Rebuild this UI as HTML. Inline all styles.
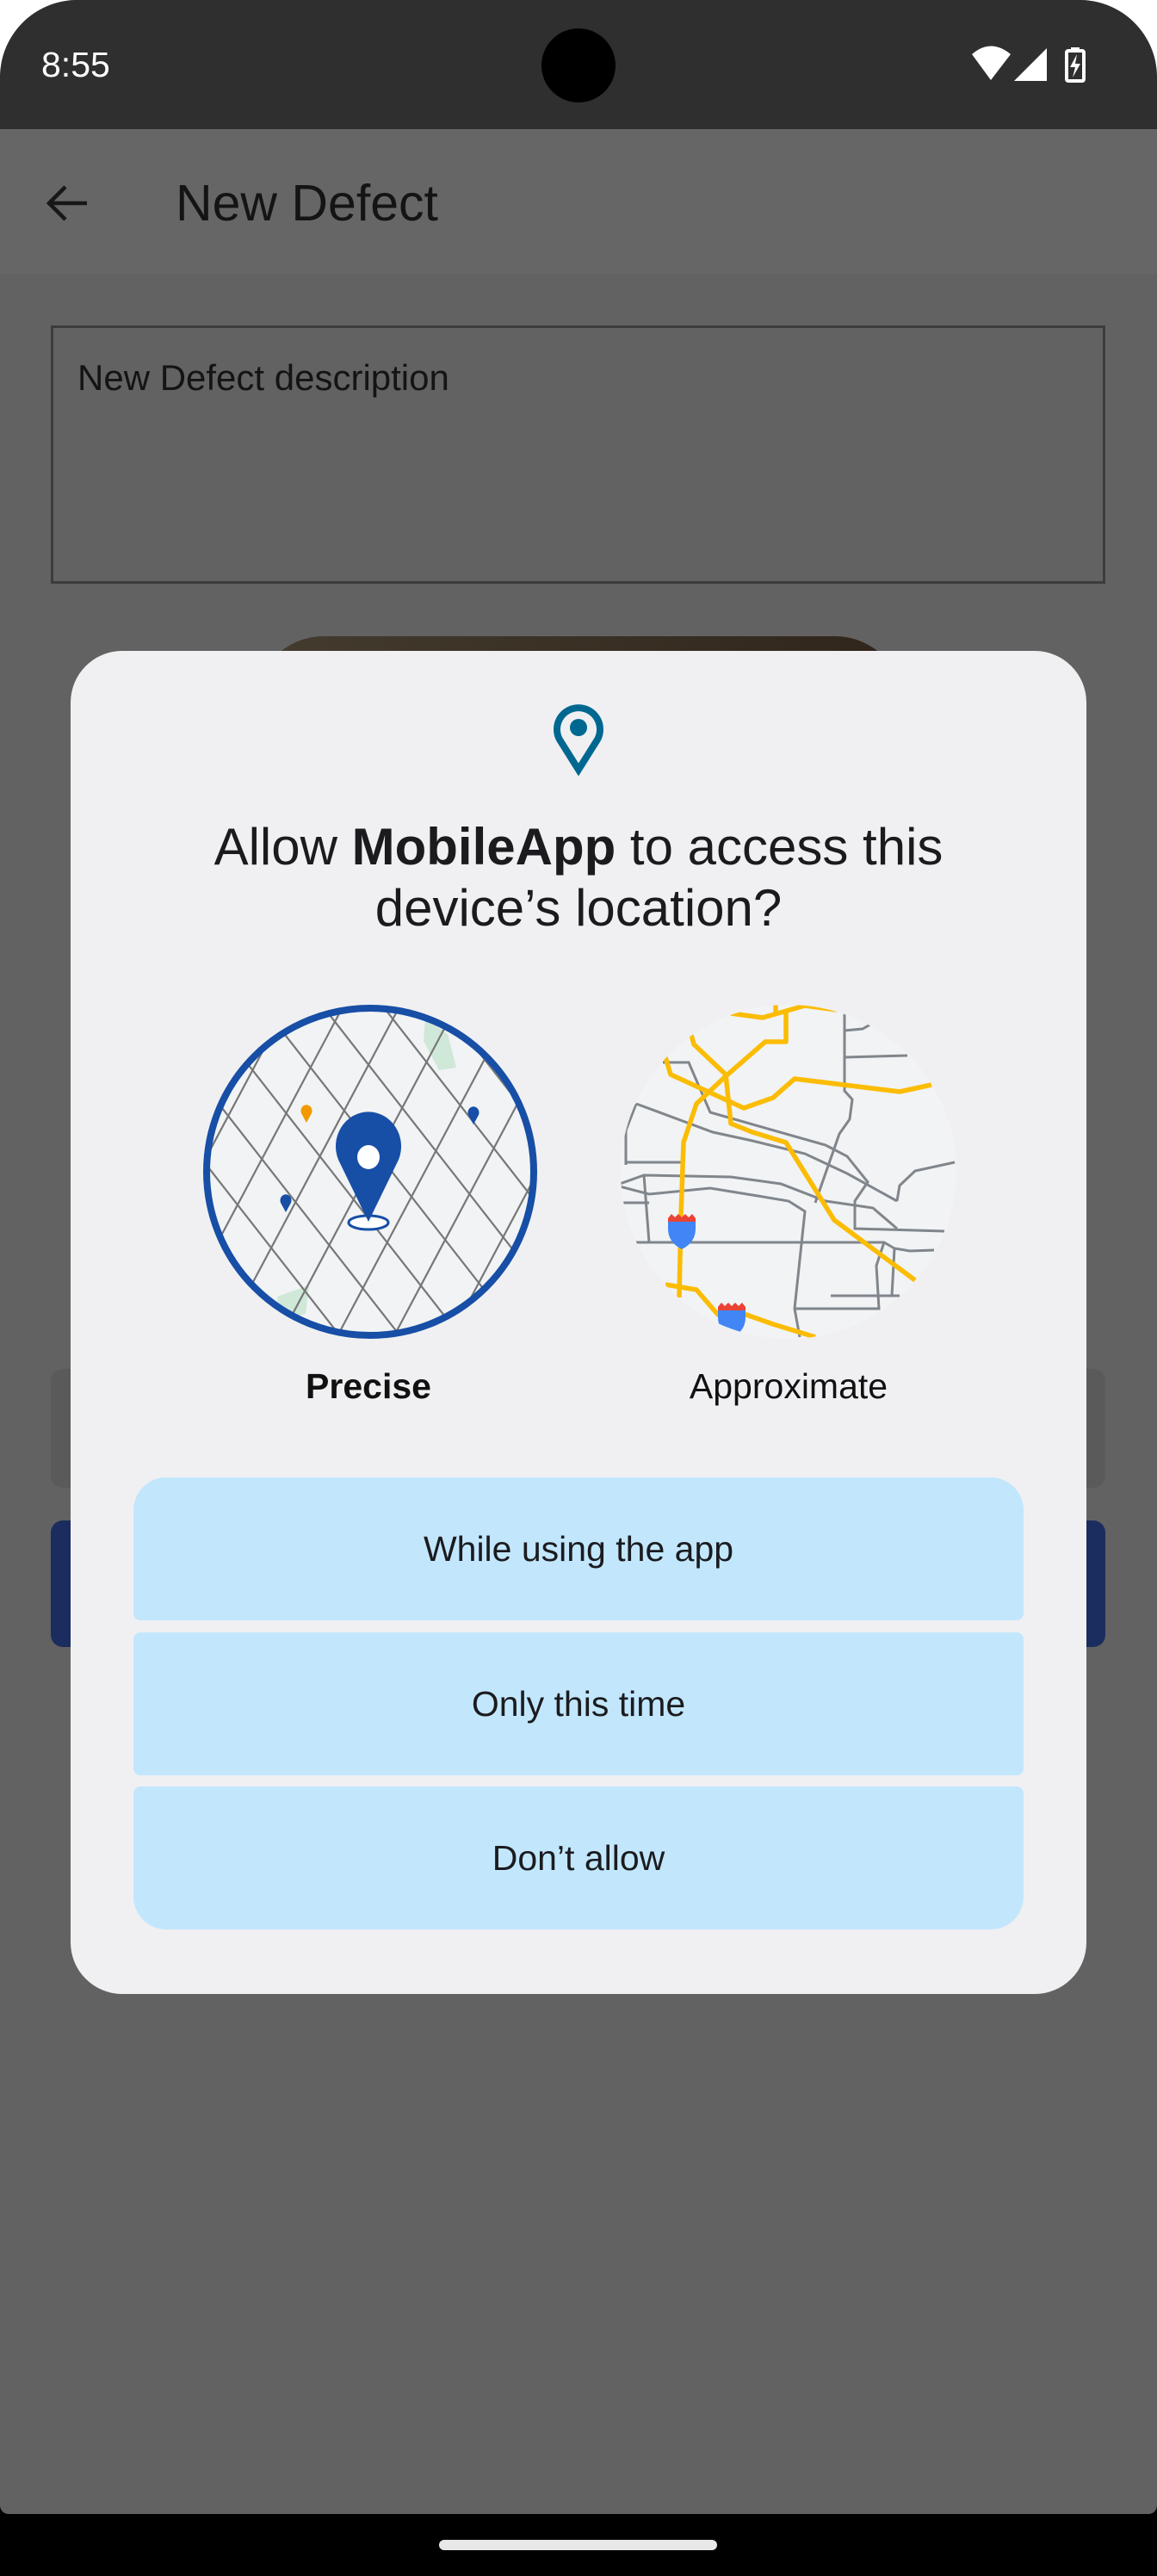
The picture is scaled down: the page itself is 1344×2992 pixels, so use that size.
<!DOCTYPE html>
<html><head><meta charset="utf-8"><style>
*{margin:0;padding:0;box-sizing:border-box}
body{width:1344px;height:2992px;background:#fff;position:relative;overflow:hidden;font-family:"Liberation Sans",Roboto,sans-serif}
.abs{position:absolute}
#screen{left:0;top:0;width:1344px;height:2992px;background:#000;border-radius:90px 90px 0 0;overflow:hidden}
.btn{position:absolute;left:155px;width:1034px;height:166px;background:#c2e7fd;display:flex;align-items:center;justify-content:center;font-size:41px;color:#1b1b1f}
</style></head><body>
<div id="screen" class="abs">
  <div class="abs" style="left:0;top:0;width:1344px;height:150px;background:#2f2f2f"></div>
  <div class="abs" style="left:48px;top:52px;font-size:41px;color:#fff">8:55</div>
  <div class="abs" style="left:629px;top:33px;width:86px;height:86px;border-radius:50%;background:#000"></div>
  <svg class="abs" style="left:1120px;top:50px" width="150" height="50" viewBox="1120 50 150 50">
    <path d="M1129 63 Q1151 44 1174 63 L1151 93 Z" fill="#fff"/>
    <path d="M1178 94 L1216 56 L1216 94 Z" fill="#fff"/>
    <rect x="1239" y="59" width="20" height="35" rx="2" fill="none" stroke="#fff" stroke-width="4"/>
    <rect x="1244" y="55" width="10" height="5" fill="#fff"/>
    <path d="M1251 63 L1243 78 L1249 78 L1246 90 L1255 74 L1249 74 Z" fill="#fff"/>
  </svg>
  <div class="abs" style="left:0;top:150px;width:1344px;height:2770px;background:#626262;border-radius:0 0 10px 10px"></div>
  <div class="abs" style="left:0;top:150px;width:1344px;height:168px;background:#666"></div>
  <svg class="abs" style="left:50px;top:210px" width="56" height="56" viewBox="0 0 56 56"><path d="M51 26 H8 M26 7 L7 26 L26 45" fill="none" stroke="#171717" stroke-width="4.5"/></svg>
  <div class="abs" style="left:204px;top:202px;font-size:59px;color:#141414">New Defect</div>
  <div class="abs" style="left:59px;top:378px;width:1225px;height:300px;border:3px solid #3c3c3c"></div>
  <div class="abs" style="left:90px;top:415px;font-size:42px;color:#141414">New Defect description</div>
  <div class="abs" style="left:296px;top:739px;width:754px;height:200px;border-radius:80px 80px 0 0;background:linear-gradient(90deg,#443c2f,#30251b)"></div>
  <div class="abs" style="left:59px;top:1590px;width:1225px;height:138px;background:#5a5a5a;border-radius:14px"></div>
  <div class="abs" style="left:59px;top:1766px;width:1225px;height:147px;background:#1b2d5e;border-radius:14px"></div>

  <div class="abs" style="left:82px;top:756px;width:1180px;height:1560px;background:#f0f0f2;border-radius:60px"></div>
  <svg class="abs" style="left:640px;top:815px" width="64" height="86" viewBox="0 0 64 86"><path d="M32 79 L10 44 A25 25 0 1 1 54 44 Z" fill="none" stroke="#006890" stroke-width="8" stroke-linejoin="miter"/><circle cx="32" cy="30" r="10" fill="#006890"/></svg>
  <div class="abs" style="left:82px;top:948px;width:1180px;text-align:center;font-size:60px;line-height:71px;color:#1b1b1f">Allow <b>MobileApp</b> to access this<br>device’s location?</div>

  <svg class="abs" style="left:230px;top:1161px" width="400" height="400" viewBox="0 0 400 400">
    <defs><clipPath id="c1"><circle cx="200" cy="200" r="190"/></clipPath></defs>
    <circle cx="200" cy="200" r="190" fill="#f1f3f4"/>
    <g clip-path="url(#c1)">
      <path d="M264 22 L290 40 L300 79 L280 82 L262 48 Z" fill="#cfe8d8"/>
      <path d="M92 345 L129 332 L125 365 L95 372 Z" fill="#cfe8d8"/>
      <g transform="rotate(52 200 200)" stroke="#777" stroke-width="2.2">
        <line x1="-100" y1="-40" x2="500" y2="-40"/><line x1="-100" y1="15" x2="500" y2="15"/><line x1="-100" y1="70" x2="500" y2="70"/><line x1="-100" y1="125" x2="500" y2="125"/><line x1="-100" y1="180" x2="500" y2="180"/><line x1="-100" y1="235" x2="500" y2="235"/><line x1="-100" y1="290" x2="500" y2="290"/><line x1="-100" y1="345" x2="500" y2="345"/><line x1="-100" y1="400" x2="500" y2="400"/>
      </g>
      <g transform="rotate(118 200 200)" stroke="#777" stroke-width="2.2">
        <line x1="-100" y1="-30" x2="500" y2="-30"/><line x1="-100" y1="28" x2="500" y2="28"/><line x1="-100" y1="86" x2="500" y2="86"/><line x1="-100" y1="144" x2="500" y2="144"/><line x1="-100" y1="202" x2="500" y2="202"/><line x1="-100" y1="260" x2="500" y2="260"/><line x1="-100" y1="318" x2="500" y2="318"/><line x1="-100" y1="376" x2="500" y2="376"/>
      </g>
      <path d="M126 143 L120 132 A6.5 7 0 1 1 132 132 Z" fill="#f29900"/>
      <path d="M320 145 L314 134 A6.5 7 0 1 1 326 134 Z" fill="#174ea6"/>
      <path d="M102 247 L96 236 A6.5 7 0 1 1 108 236 Z" fill="#174ea6"/>
    </g>
    <circle cx="200" cy="200" r="190" fill="none" stroke="#174ea6" stroke-width="8"/>
    <ellipse cx="198" cy="259" rx="23" ry="8" fill="#fff" stroke="#174ea6" stroke-width="3"/>
    <path d="M198 258 L163 186 A38 40 0 1 1 233 186 Z" fill="#174ea6"/>
    <ellipse cx="198" cy="183" rx="13" ry="14" fill="#fff"/>
  </svg>

  <svg class="abs" style="left:716px;top:1161px" width="400" height="400" viewBox="0 0 400 400">
    <defs><clipPath id="c2"><ellipse cx="200" cy="200" rx="195" ry="194"/></clipPath></defs>
    <g clip-path="url(#c2)">
      <rect width="400" height="400" fill="#f1f3f4"/>
      <g fill="none" stroke="#80868b" stroke-width="3">
        <polyline points="265,16 265,106 274,116 271,139 259,156 231,236"/>
        <polyline points="265,36 286,34 295,29"/>
        <polyline points="265,67 338,65"/>
        <polyline points="23,121 112,154 158,164 219,179 268,202 326,234"/>
        <polyline points="54,73 84,73 109,131 243,169 268,182 292,212 277,234 277,266 381,269"/>
        <polyline points="23,121 11,152 11,192"/>
        <polyline points="11,189 75,189"/>
        <polyline points="4,214 32,204 133,206 191,214 243,234 298,242 326,266"/>
        <polyline points="4,217 38,226 109,219 164,228 200,234 219,246 207,359 213,392"/>
        <polyline points="32,204 38,282"/>
        <polyline points="4,236 38,236"/>
        <polyline points="23,282 311,282 323,289 341,292 369,291"/>
        <polyline points="311,282 302,309 305,359 207,359"/>
        <polyline points="249,344 329,344"/>
        <polyline points="323,289 320,344"/>
        <polyline points="326,234 329,216 347,199 393,189"/>
      </g>
      <g fill="none" stroke="#fbbc04" stroke-width="5.5" stroke-linejoin="round">
        <polyline points="133,16 170,21 219,7 256,12"/>
        <polyline points="185,6 185,18"/>
        <polyline points="197,12 197,49 173,49 127,89 93,121 78,166 75,252 73,346"/>
        <polyline points="87,41 90,52 127,87 133,144 158,154 197,166 253,256 347,326"/>
        <polyline points="57,67 63,87 148,126 182,114 207,92 329,107 366,99"/>
        <polyline points="57,331 93,337 118,366 151,366 182,377 231,392"/>
      </g>
      <g>
        <path d="M60 254 h32 v12 q0 16 -16 24 q-16 -8 -16 -24 Z" fill="#4285f4"/>
        <path d="M60 254 l4 -5 4 4 4 -4 4 4 4 -4 4 4 4 -4 4 5 v4 h-32 Z" fill="#ea4335"/>
        <path d="M118 357 h32 v12 q0 16 -16 24 q-16 -8 -16 -24 Z" fill="#4285f4"/>
        <path d="M118 357 l4 -5 4 4 4 -4 4 4 4 -4 4 4 4 -4 4 5 v4 h-32 Z" fill="#ea4335"/>
      </g>
    </g>
  </svg>

  <div class="abs" style="left:228px;top:1587px;width:400px;text-align:center;font-size:41px;font-weight:bold;color:#111">Precise</div>
  <div class="abs" style="left:716px;top:1587px;width:400px;text-align:center;font-size:41px;color:#111">Approximate</div>

  <div class="btn" style="top:1716px;border-radius:38px 38px 8px 8px">While using the app</div>
  <div class="btn" style="top:1896px;border-radius:8px">Only this time</div>
  <div class="btn" style="top:2075px;border-radius:8px 8px 38px 38px">Don’t allow</div>

  <div class="abs" style="left:510px;top:2950px;width:323px;height:12px;border-radius:6px;background:#e8e8e8"></div>
</div>
</body></html>
